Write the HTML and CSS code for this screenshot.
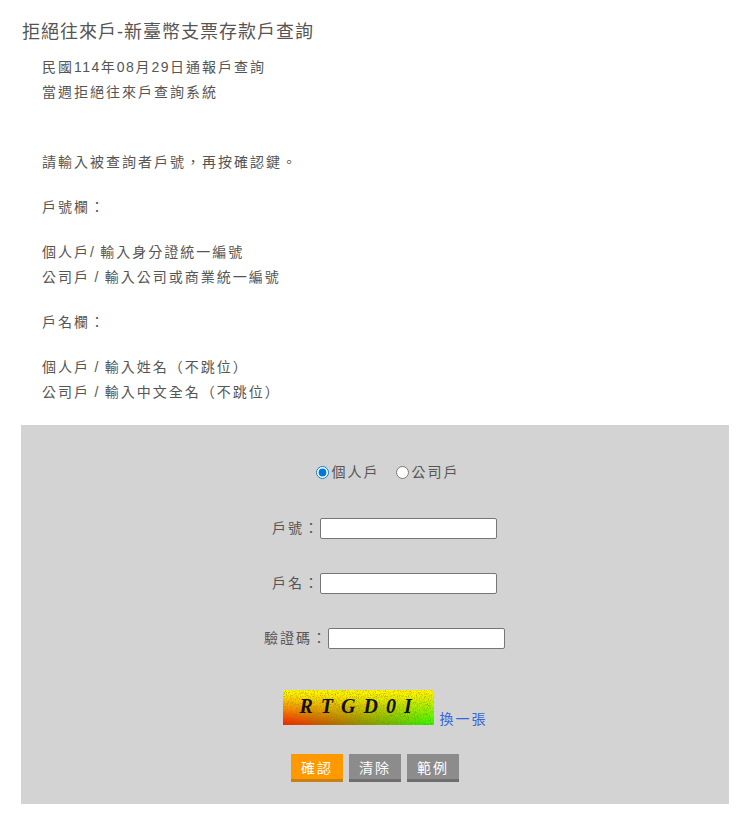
FILE: index.html
```html
<!DOCTYPE html>
<html lang="zh-Hant">
<head>
  <meta charset="UTF-8">
  <title>拒絕往來戶-新臺幣支票存款戶查詢</title>
  <link rel="stylesheet" href="styles.css">
</head>
<body>

<div class="page">
  <h1 class="title">拒絕往來戶-新臺幣支票存款戶查詢</h1>

  <div class="intro">
    <p>民國<span class="num">114</span>年<span class="num">08</span>月<span class="num">29</span>日通報戶查詢<br>當週拒絕往來戶查詢系統</p>
    <p class="after-blank">請輸入被查詢者戶號，再按確認鍵。</p>
    <p>戶號欄：</p>
    <p>個人戶/ 輸入身分證統一編號<br>公司戶 / 輸入公司或商業統一編號</p>
    <p>戶名欄：</p>
    <p>個人戶 / 輸入姓名（不跳位）<br>公司戶 / 輸入中文全名（不跳位）</p>
  </div>

  <form class="query-form">
    <div class="fields">
      <div class="row radios">
        <label><input type="radio" name="kind" checked>個人戶</label>
        <label><input type="radio" name="kind">公司戶</label>
      </div>
      <div class="row field">戶號：<input type="text" class="text-input"></div>
      <div class="row field">戶名：<input type="text" class="text-input"></div>
      <div class="row field">驗證碼：<input type="text" class="text-input"></div>

      <div class="captcha-row">
        <div class="captcha">
          <svg class="noise" width="151" height="35">
            <filter id="grain">
              <feTurbulence type="fractalNoise" baseFrequency="1.1" numOctaves="2" seed="4"></feTurbulence>
              <feColorMatrix values="0 0 0 0 0.25  0 0 0 0 0.2  0 0 0 0 0  1.6 0 0 0 -0.72"></feColorMatrix>
            </filter>
            <rect width="151" height="35" filter="url(#grain)"></rect>
          </svg>
          <span class="captcha-text">RTGD0I</span>
        </div>
        <a href="#" class="swap">換一張</a>
      </div>
    </div>

    <div class="buttons">
      <button type="button" class="btn btn-orange">確認</button>
      <button type="button" class="btn">清除</button>
      <button type="button" class="btn">範例</button>
    </div>
  </form>
</div>

</body>
</html>
```

FILE: styles.css
```css
html, body {
  margin: 0;
  padding: 0;
  background: #fff;
}

body {
  font-family: "Liberation Sans", "Noto Sans CJK TC", sans-serif;
  font-size: 14px;
  color: #555;
  letter-spacing: 2px;
  word-spacing: -1.5px;
}

.page {
  padding: 19px 20px 0 21px;
}

.title {
  margin: 0 0 0 1px;
  font-size: 18px;
  font-weight: normal;
  line-height: 26px;
  letter-spacing: 1px;
}

.intro {
  padding: 10px 0 20px 21px;
}

.intro p {
  margin: 0 0 20px;
  line-height: 25px;
}

.intro p:last-child {
  margin-bottom: 0;
}

.intro .after-blank {
  margin-top: 45px;
}

.num {
  letter-spacing: 1.5px;
}

.query-form {
  background: #d3d3d3;
  height: 379px;
  padding-top: 35px;
  box-sizing: border-box;
  text-align: center;
}

.fields {
  padding-left: 20px;
}

.row {
  height: 25px;
  line-height: 25px;
}

.radios {
  margin-bottom: 31px;
  padding-left: 5px;
  display: flex;
  justify-content: center;
  gap: 16px;
}

.radios label {
  display: flex;
  align-items: center;
}

.radios input {
  width: 13px;
  height: 13px;
  margin: 0 3px 0 0;
  accent-color: #0078d7;
}

.field {
  margin-bottom: 30px;
  padding-right: 1px;
  display: flex;
  justify-content: center;
  align-items: center;
}

.text-input {
  width: 177px;
  height: 21px;
  box-sizing: border-box;
  margin: 0;
  padding: 1px 2px;
  border: 1px solid #767676;
  border-radius: 2px;
  background: #fff;
}

.captcha-row {
  margin-top: 37px;
  display: flex;
  justify-content: center;
  align-items: flex-end;
  gap: 6px;
  height: 37px;
}

.captcha {
  position: relative;
  width: 151px;
  height: 35px;
  overflow: hidden;
  background:
    linear-gradient(to bottom, rgba(255, 245, 0, 1) 10%, rgba(255, 245, 0, 0) 95%),
    linear-gradient(to right, #ff2000, #30ff00);
}

.noise {
  position: absolute;
  left: 0;
  top: 0;
}

.captcha-text {
  position: absolute;
  left: 17px;
  top: 3px;
  font-family: "Liberation Serif", serif;
  font-size: 20px;
  font-weight: bold;
  font-style: italic;
  line-height: 26px;
  letter-spacing: 8px;
  color: #111;
}

.swap {
  color: #3366dd;
  text-decoration: none;
  line-height: 16px;
  margin-bottom: -2px;
}

.buttons {
  margin-top: 29px;
  display: flex;
  justify-content: center;
  gap: 6px;
}

.btn {
  width: 52px;
  height: 28px;
  box-sizing: border-box;
  padding: 0;
  border: none;
  border-bottom: 3px solid #6e6e6e;
  background: #8c8c8c;
  color: #fff;
  font: inherit;
  letter-spacing: 2px;
  cursor: pointer;
}

.btn-orange {
  background: #ff9900;
  border-bottom-color: #c87f14;
}
```
